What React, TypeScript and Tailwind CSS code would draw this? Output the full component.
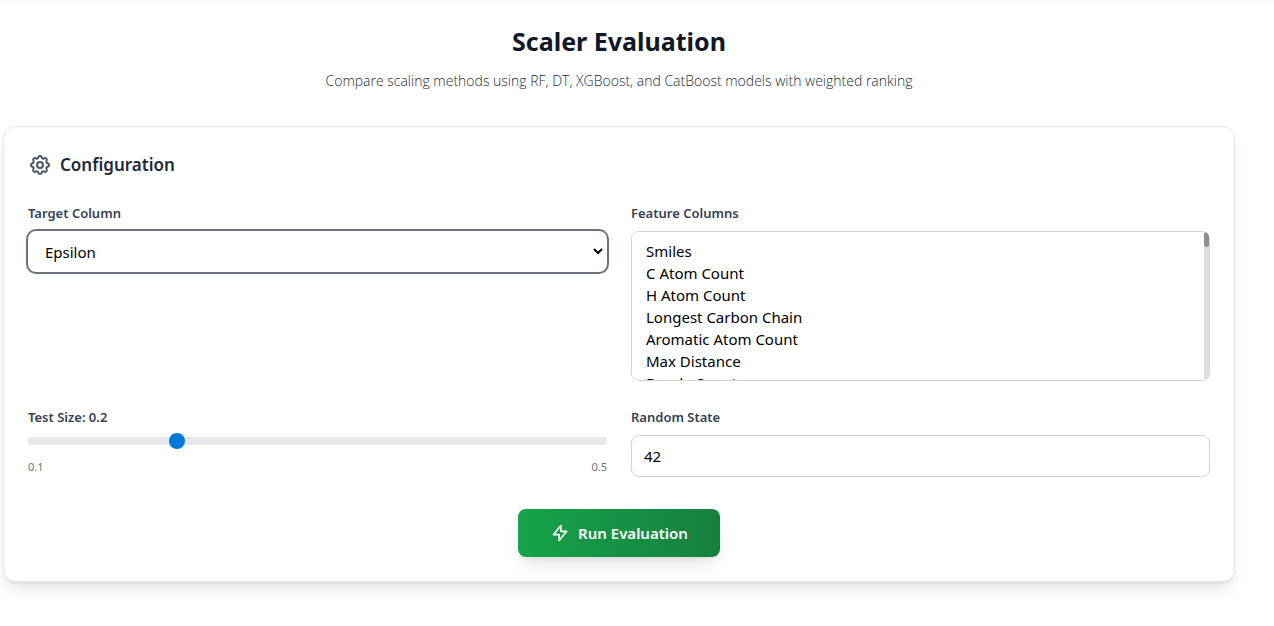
import { useState } from "react";

const FEATURES = [
  "Smiles",
  "C Atom Count",
  "H Atom Count",
  "Longest Carbon Chain",
  "Aromatic Atom Count",
  "Max Distance",
  "Bonds Count",
  ...Array.from({ length: 58 }, (_, i) => `Descriptor ${i + 1}`),
];

const labelClass = "mb-2 block text-[13px] leading-5 font-semibold text-gray-700";

function GearIcon() {
  return (
    <svg className="size-6 text-gray-600" viewBox="0 0 24 24" fill="none" stroke="currentColor" strokeWidth="2" strokeLinecap="round" strokeLinejoin="round" aria-hidden="true">
      <path d="M10.325 4.317c.426-1.756 2.924-1.756 3.35 0a1.724 1.724 0 002.573 1.066c1.543-.94 3.31.826 2.37 2.37a1.724 1.724 0 001.065 2.572c1.756.426 1.756 2.924 0 3.35a1.724 1.724 0 00-1.066 2.573c.94 1.543-.826 3.31-2.37 2.37a1.724 1.724 0 00-2.572 1.065c-.426 1.756-2.924 1.756-3.35 0a1.724 1.724 0 00-2.573-1.066c-1.543.94-3.31-.826-2.37-2.37a1.724 1.724 0 00-1.065-2.572c-1.756-.426-1.756-2.924 0-3.35a1.724 1.724 0 001.066-2.573c-.94-1.543.826-3.31 2.37-2.37.996.608 2.296.07 2.572-1.065z" />
      <path d="M15 12a3 3 0 11-6 0 3 3 0 016 0z" />
    </svg>
  );
}

function BoltIcon() {
  return (
    <svg className="size-5" viewBox="0 0 24 24" fill="none" stroke="currentColor" strokeWidth="2" strokeLinecap="round" strokeLinejoin="round" aria-hidden="true">
      <path d="M13 10V3L4 14h7v7l9-11h-7z" />
    </svg>
  );
}

function FeatureList() {
  const [selected, setSelected] = useState<string[]>([]);
  const [progress, setProgress] = useState(0);

  return (
    <div className="relative">
      <select
        id="features"
        multiple
        value={selected}
        onChange={(e) => setSelected(Array.from(e.target.selectedOptions, (o) => o.value))}
        onScroll={(e) => {
          const el = e.currentTarget;
          setProgress(el.scrollTop / Math.max(1, el.scrollHeight - el.clientHeight));
        }}
        className="block h-[150px] w-full rounded-lg border border-gray-300 bg-white py-[9px] pl-[14px] text-[15px] text-black outline-none [scrollbar-width:none]"
      >
        {FEATURES.map((f) => <option key={f} className="h-[22px] leading-[22px]">{f}</option>)}
      </select>
      <div aria-hidden="true" className="pointer-events-none absolute inset-y-px right-px w-[5px] overflow-hidden rounded-r-[6px] bg-[#dedede]">
        <div
          className="absolute h-[15px] w-full rounded-full bg-[#8f8f8f]"
          style={{ top: `${progress * 90}%` }}
        />
      </div>
    </div>
  );
}

export default function App() {
  const [target, setTarget] = useState("Epsilon");
  const [testSize, setTestSize] = useState(0.2);
  const [randomState, setRandomState] = useState("42");

  return (
    <main className="border-t border-gray-50 bg-white pt-[22px] pr-[39px] pb-11 pl-[3px] font-['Noto_Sans',sans-serif] text-gray-900">
      <header className="mb-[33px] text-center">
        <h1 className="text-[25px] leading-9 font-bold text-gray-900">Scaler Evaluation</h1>
        <p className="mt-[10px] font-['Open_Sans','Noto_Sans',sans-serif] text-[14px] leading-6 font-light text-gray-800">
          Compare scaling methods using RF, DT, XGBoost, and CatBoost models with weighted ranking
        </p>
      </header>

      <section className="rounded-xl border border-gray-200 bg-white p-6 shadow-lg">
        <h2 className="mb-6 flex items-center gap-2 text-[17px] leading-7 font-semibold text-gray-800">
          <GearIcon />
          Configuration
        </h2>

        <div className="grid grid-cols-2 gap-x-6 gap-y-[26px]">
          <div>
            <label htmlFor="target" className={labelClass}>Target Column</label>
            <select
              id="target"
              value={target}
              onChange={(e) => setTarget(e.target.value)}
              className="block h-[41px] w-full rounded-lg border border-transparent bg-white px-3 text-[15px] text-black ring-2 ring-gray-500 outline-none"
            >
              <option>Epsilon</option>
              {FEATURES.map((f) => <option key={f}>{f}</option>)}
            </select>
          </div>

          <div>
            <label htmlFor="features" className={labelClass}>Feature Columns</label>
            <FeatureList />
          </div>

          <div>
            <label htmlFor="test-size" className={labelClass}>Test Size: {testSize}</label>
            <input
              id="test-size"
              type="range"
              min="0.1"
              max="0.5"
              step="0.05"
              value={testSize}
              onChange={(e) => setTestSize(Number(e.target.value))}
              className="mt-[10px] block h-2 w-full cursor-pointer appearance-none rounded-lg bg-gray-200 [&::-webkit-slider-thumb]:size-4 [&::-webkit-slider-thumb]:appearance-none [&::-webkit-slider-thumb]:rounded-full [&::-webkit-slider-thumb]:bg-[#0078d7]"
            />
            <div className="mt-[14px] flex justify-between text-[11px] leading-4 text-gray-500">
              <span>0.1</span>
              <span>0.5</span>
            </div>
          </div>

          <div>
            <label htmlFor="random-state" className={labelClass}>Random State</label>
            <input
              id="random-state"
              type="text"
              inputMode="numeric"
              value={randomState}
              onChange={(e) => setRandomState(e.target.value)}
              className="block h-[42px] w-full rounded-lg border border-gray-300 bg-white px-3 text-[15px] text-black outline-none"
            />
          </div>
        </div>

        <div className="mt-8 flex justify-center">
          <button
            type="button"
            className="flex h-12 items-center gap-2 rounded-lg bg-linear-to-r from-[#16a34a] to-[#15803d] px-8 text-[15px] font-semibold text-white shadow-lg"
          >
            <BoltIcon />
            Run Evaluation
          </button>
        </div>
      </section>
    </main>
  );
}
